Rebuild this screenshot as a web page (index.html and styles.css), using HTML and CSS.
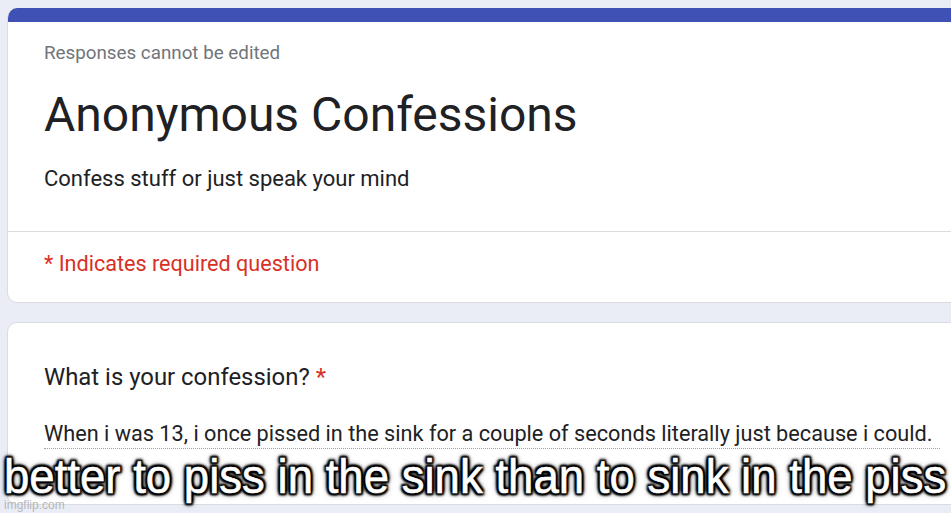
FILE: index.html
```html
<!DOCTYPE html>
<html>
<head>
<meta charset="utf-8">
<link rel="stylesheet" href="styles.css">
</head>
<body>
<div class="page">
  <div class="card head-card">
    <div class="bar"></div>
    <div class="header">
      <div class="note">Responses cannot be edited</div>
      <div class="title">Anonymous Confessions</div>
      <div class="desc">Confess stuff or just speak your mind</div>
    </div>
    <div class="required">* Indicates required question</div>
  </div>
  <div class="card q-card">
    <div class="question">What is your confession? <span class="star">*</span></div>
    <div class="answer">When i was 13, i once pissed in the sink for a couple of seconds literally just because i could.</div>
  </div>
</div>
<div class="caption">better to piss in the sink than to sink in the piss</div>
<div class="watermark">imgflip.com</div>
</body>
</html>
```
FILE: styles.css
```css
html, body {
  margin: 0;
  padding: 0;
  width: 951px;
  height: 513px;
  overflow: hidden;
  background: #ebedf6;
  font-family: Roboto, "Liberation Sans", sans-serif;
  color: #202124;
}
.page {
  padding: 8px 0 0 7px;
}
.card {
  width: 980px;
  background: #fff;
  border: 1px solid #dadce0;
  border-radius: 10px;
  box-sizing: border-box;
  overflow: hidden;
}
.head-card {
  border-top: none;
}
.bar {
  height: 14px;
  background: #3f51b5;
}
.header {
  padding: 19px 36px 38px;
  border-bottom: 1px solid #dadce0;
}
.note {
  font-size: 18.8px;
  line-height: 24px;
  color: #70757a;
}
.title {
  margin-top: 20px;
  font-size: 48px;
  line-height: 60px;
}
.desc {
  margin-top: 20px;
  font-size: 22px;
  line-height: 28px;
}
.required {
  padding: 18px 36px 24px;
  font-size: 21.6px;
  line-height: 28px;
  color: #d93025;
}
.q-card {
  margin-top: 19px;
  padding: 39px 36px 54px;
  height: 183px;
}
.question {
  font-size: 23.9px;
  line-height: 30px;
}
.star {
  color: #d93025;
}
.answer {
  margin-top: 28px;
  width: 896px;
  font-size: 21.7px;
  line-height: 28px;
  white-space: nowrap;
  border-bottom: 1px dotted #9aa0a6;
}
.caption {
  position: absolute;
  left: 4px;
  top: 451px;
  font-family: "Liberation Sans", Arial, sans-serif;
  font-size: 49px;
  line-height: 50px;
  color: #fff;
  white-space: nowrap;
  transform: scaleX(0.93);
  transform-origin: left top;
  -webkit-text-stroke: 0.6px #fff;
  text-shadow: 2px 2px 2px #000, -2px -2px 2px #000, 2px -2px 2px #000, -2px 2px 2px #000,
    0 2px 3px #000, 0 -2px 3px #000, 2px 0 3px #000, -2px 0 3px #000,
    0 0 6px #000, 0 0 8px rgba(0, 0, 0, 0.7);
}
.watermark {
  position: absolute;
  left: 4px;
  top: 498px;
  font-family: "Liberation Sans", Arial, sans-serif;
  font-size: 12px;
  line-height: 14px;
  color: rgba(170, 170, 170, 0.85);
}
```
